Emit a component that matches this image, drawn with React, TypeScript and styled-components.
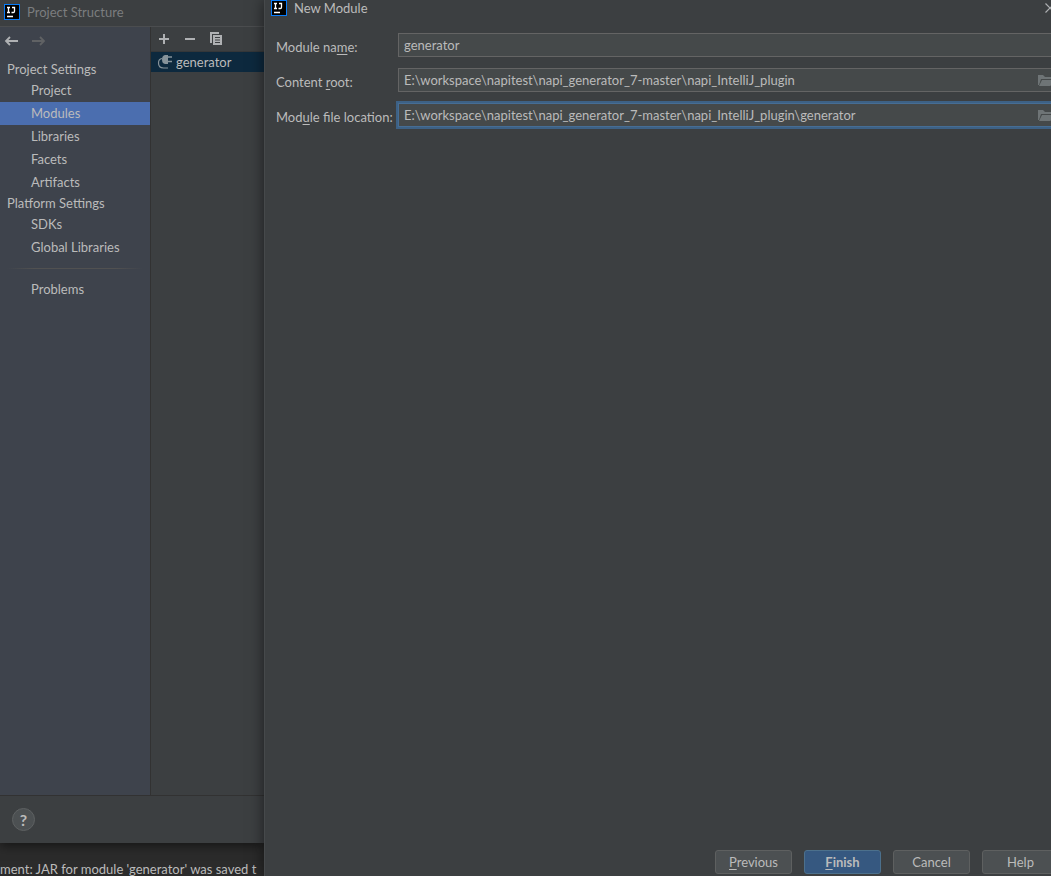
import React from "react";
import styled, { createGlobalStyle, css } from "styled-components";

const GlobalStyle = createGlobalStyle`
  * { box-sizing: border-box; }
  body {
    margin: 0;
    overflow: hidden;
    background: #2b2b2b;
    color: #bbbbbb;
    font: 13px/18px Lato, "Open Sans", sans-serif;
  }
  button, input { font: inherit; color: inherit; }
  a { color: inherit; text-decoration: none; }
`;

const Desktop = styled.div`
  display: grid;
  grid-template-columns: 264px 1fr;
  height: 100vh;
`;

const Backdrop = styled.div`
  display: flex;
  flex-direction: column;
  min-width: 0;
`;

const StructureWindow = styled.section`
  flex: 1;
  display: flex;
  flex-direction: column;
  background: #3c3f41;
  box-shadow: 0 3px 10px rgba(0, 0, 0, 0.5);
`;

const StructureTitle = styled.header`
  display: flex;
  align-items: center;
  gap: 7px;
  height: 27px;
  padding: 0 4px 2px;
  border-bottom: 1px solid #4b4d4f;
  color: #7b7d7f;
`;

const StructureBody = styled.div`
  flex: 1;
  display: flex;
`;

const Sidebar = styled.nav`
  width: 151px;
  border-right: 1px solid #323232;
  background: #3e434c;
`;

const History = styled.div`
  display: flex;
  gap: 11px;
  height: 33px;
  padding: 6px 4px;
`;

const IconButton = styled.button`
  display: flex;
  padding: 0;
  border: 0;
  background: none;
  color: #afb1b3;
  &:disabled { color: #606264; }
`;

const GroupTitle = styled.div`
  padding: 0 7px;
  line-height: 19px;
`;

const NavLink = styled.a<{ $active?: boolean }>`
  display: block;
  padding: 0 31px;
  line-height: 23px;
  white-space: nowrap;
  background: ${(p) => (p.$active ? "#4b6eaf" : "transparent")};
`;

const Divider = styled.hr`
  height: 1px;
  margin: 9px 7px;
  border: 0;
  background: linear-gradient(90deg, transparent, #515151 20%, #515151 80%, transparent);
`;

const ModulePane = styled.div`
  flex: 1;
`;

const Toolbar = styled.div`
  display: flex;
  align-items: center;
  gap: 10px;
  height: 25px;
  padding: 0 5px;
  border-bottom: 1px solid #353739;
`;

const ModuleRow = styled.button`
  display: flex;
  align-items: center;
  gap: 3px;
  width: 100%;
  height: 20px;
  padding: 0 6px;
  border: 0;
  background: #0d293e;
`;

const StructureFooter = styled.footer`
  height: 48px;
  padding: 12px;
  border-top: 1px solid #323232;
`;

const HelpButton = styled.button`
  display: block;
  width: 23px;
  height: 23px;
  padding: 0;
  border: 1px solid #5e6162;
  border-radius: 50%;
  background: #4c5052;
  font-size: 16px;
  font-weight: 700;
  line-height: 20px;
`;

const Console = styled.div`
  height: 33px;
  padding-top: 17px;
  white-space: nowrap;
`;

const Dialog = styled.section`
  z-index: 1;
  display: flex;
  flex-direction: column;
  margin-right: -20px;
  background: #3c3f41;
  border-left: 1px solid #46494b;
  box-shadow: 0 0 14px rgba(0, 0, 0, 0.55);
`;

const DialogTitle = styled.header`
  display: flex;
  align-items: center;
  gap: 7px;
  height: 16px;
  padding: 0 16px 0 6px;
`;

const CloseButton = styled(IconButton)`
  margin-left: auto;
`;

const Form = styled.form`
  flex: 1;
  display: flex;
  flex-direction: column;
  gap: 11px;
  padding: 17px 12px 0 11px;
`;

const Field = styled.div`
  display: grid;
  grid-template-columns: 122px 1fr;
  height: 24px;
`;

const Label = styled.label`
  padding-top: 5px;
  white-space: nowrap;
`;

const Mnemonic = styled.span`
  text-decoration: underline;
  text-underline-offset: 2px;
`;

const InputBox = styled.div<{ $focused?: boolean }>`
  display: flex;
  align-items: center;
  border: 1px solid #646464;
  background: #45494a;
  ${(p) =>
    p.$focused &&
    css`
      border-color: #466d94;
      box-shadow: 0 0 0 2px #3d6185;
    `}
`;

const Input = styled.input`
  flex: 1;
  min-width: 0;
  height: 22px;
  padding: 0 5px;
  border: 0;
  outline: 0;
  background: transparent;
`;

const BrowseButton = styled(IconButton)`
  padding: 0 5px;
  color: #6e7476;
`;

const Actions = styled.footer`
  display: flex;
  justify-content: flex-end;
  gap: 12px;
  padding: 0 12px 2px;
`;

const ActionButton = styled.button<{ $primary?: boolean }>`
  width: 77px;
  height: 24px;
  padding: 0;
  border: 1px solid ${(p) => (p.$primary ? "#4c708c" : "#5e6060")};
  border-radius: 3px;
  background: ${(p) => (p.$primary ? "#365880" : "#4c5052")};
  font-weight: ${(p) => (p.$primary ? 700 : 400)};
`;

const Logo = () => (
  <svg width="16" height="16" viewBox="0 0 16 16" aria-hidden="true">
    <rect width="16" height="16" fill="#087cfa" />
    <rect x="1" y="1" width="14" height="14" fill="#000" />
    <path d="M3 3.500h3M4.500 3.500v5M3 8.500h3M8 3.500h2.500v3.700q0 1.300-1.200 1.300H7.500M3 12.500h6" fill="none" stroke="#fff" strokeWidth="1.300" />
  </svg>
);

const Arrow = ({ right }: { right?: boolean }) => (
  <svg width="16" height="16" viewBox="0 0 16 16" fill="none" stroke="currentColor" strokeWidth="1.800">
    <path d={right ? "M1 8h12M9 4l4 4-4 4" : "M14 8H2M6 4L2 8l4 4"} />
  </svg>
);

const PlusIcon = () => (
  <svg width="16" height="16" fill="currentColor"><path d="M7 3h2v4h4v2H9v4H7V9H3V7h4z" /></svg>
);

const MinusIcon = () => (
  <svg width="16" height="16" fill="currentColor"><path d="M3 7h10v2H3z" /></svg>
);

const CopyIcon = () => (
  <svg width="16" height="16" fill="currentColor">
    <path d="M2 1h9v2H4v9H2z" />
    <path fillRule="evenodd" d="M5 4h9v10H5zM7 6v1h5V6zM7 8.500v1h5v-1zM7 11v1h5v-1z" />
  </svg>
);

const PlugIcon = () => (
  <svg width="16" height="16" viewBox="0 0 16 16" aria-hidden="true">
    <path d="M8 1h3v9H8Q5 9.500 5 5.500T8 1z" fill="#87939a" />
    <path d="M11 3h4M11 7.500h4" stroke="#87939a" strokeWidth="1.300" />
    <path d="M5 4.500Q1.500 5 1.500 9q0 5 5 5H11" fill="none" stroke="#87939a" strokeWidth="1.200" />
  </svg>
);

const FolderIcon = () => (
  <svg width="16" height="16" fill="currentColor">
    <path d="M1 13V3h5l2 2h7v2H4L2 13z" />
    <path d="M5 8h11l-2.500 6H2z" />
  </svg>
);

const CloseIcon = () => (
  <svg width="10" height="10" fill="none" stroke="currentColor" strokeWidth="1.200"><path d="M.5.5l9 9M9.500.5l-9 9" /></svg>
);

const projectLinks = ["Project", "Modules", "Libraries", "Facets", "Artifacts"];
const platformLinks = ["SDKs", "Global Libraries"];

type TextFieldProps = {
  id: string;
  label: React.ReactNode;
  value: string;
  browse?: boolean;
  focused?: boolean;
};

const TextField = ({ id, label, value, browse, focused }: TextFieldProps) => (
  <Field>
    <Label htmlFor={id}>{label}</Label>
    <InputBox $focused={focused}>
      <Input id={id} defaultValue={value} spellCheck={false} />
      {browse && <BrowseButton type="button" aria-label="Browse"><FolderIcon /></BrowseButton>}
    </InputBox>
  </Field>
);

export default function App() {
  return (
    <Desktop>
      <GlobalStyle />
      <Backdrop>
        <StructureWindow>
          <StructureTitle><Logo />Project Structure</StructureTitle>
          <StructureBody>
            <Sidebar>
              <History>
                <IconButton aria-label="Back"><Arrow /></IconButton>
                <IconButton aria-label="Forward" disabled><Arrow right /></IconButton>
              </History>
              <GroupTitle>Project Settings</GroupTitle>
              {projectLinks.map((name) => (
                <NavLink key={name} href="#" $active={name === "Modules"}>{name}</NavLink>
              ))}
              <GroupTitle>Platform Settings</GroupTitle>
              {platformLinks.map((name) => (
                <NavLink key={name} href="#">{name}</NavLink>
              ))}
              <Divider />
              <NavLink href="#">Problems</NavLink>
            </Sidebar>
            <ModulePane>
              <Toolbar>
                <IconButton aria-label="Add"><PlusIcon /></IconButton>
                <IconButton aria-label="Remove"><MinusIcon /></IconButton>
                <IconButton aria-label="Copy"><CopyIcon /></IconButton>
              </Toolbar>
              <ModuleRow><PlugIcon />generator</ModuleRow>
            </ModulePane>
          </StructureBody>
          <StructureFooter><HelpButton>?</HelpButton></StructureFooter>
        </StructureWindow>
        <Console>ment: JAR for module 'generator' was saved t</Console>
      </Backdrop>
      <Dialog>
        <DialogTitle>
          <Logo />New Module
          <CloseButton aria-label="Close"><CloseIcon /></CloseButton>
        </DialogTitle>
        <Form>
          <TextField id="name" label={<>Module na<Mnemonic>m</Mnemonic>e:</>} value="generator" />
          <TextField id="root" label={<>Content <Mnemonic>r</Mnemonic>oot:</>} value="E:\workspace\napitest\napi_generator_7-master\napi_IntelliJ_plugin" browse />
          <TextField id="location" label={<>Mod<Mnemonic>u</Mnemonic>le file location:</>} value="E:\workspace\napitest\napi_generator_7-master\napi_IntelliJ_plugin\generator" browse focused />
        </Form>
        <Actions>
          <ActionButton><Mnemonic>P</Mnemonic>revious</ActionButton>
          <ActionButton $primary><Mnemonic>F</Mnemonic>inish</ActionButton>
          <ActionButton>Cancel</ActionButton>
          <ActionButton>Help</ActionButton>
        </Actions>
      </Dialog>
    </Desktop>
  );
}
